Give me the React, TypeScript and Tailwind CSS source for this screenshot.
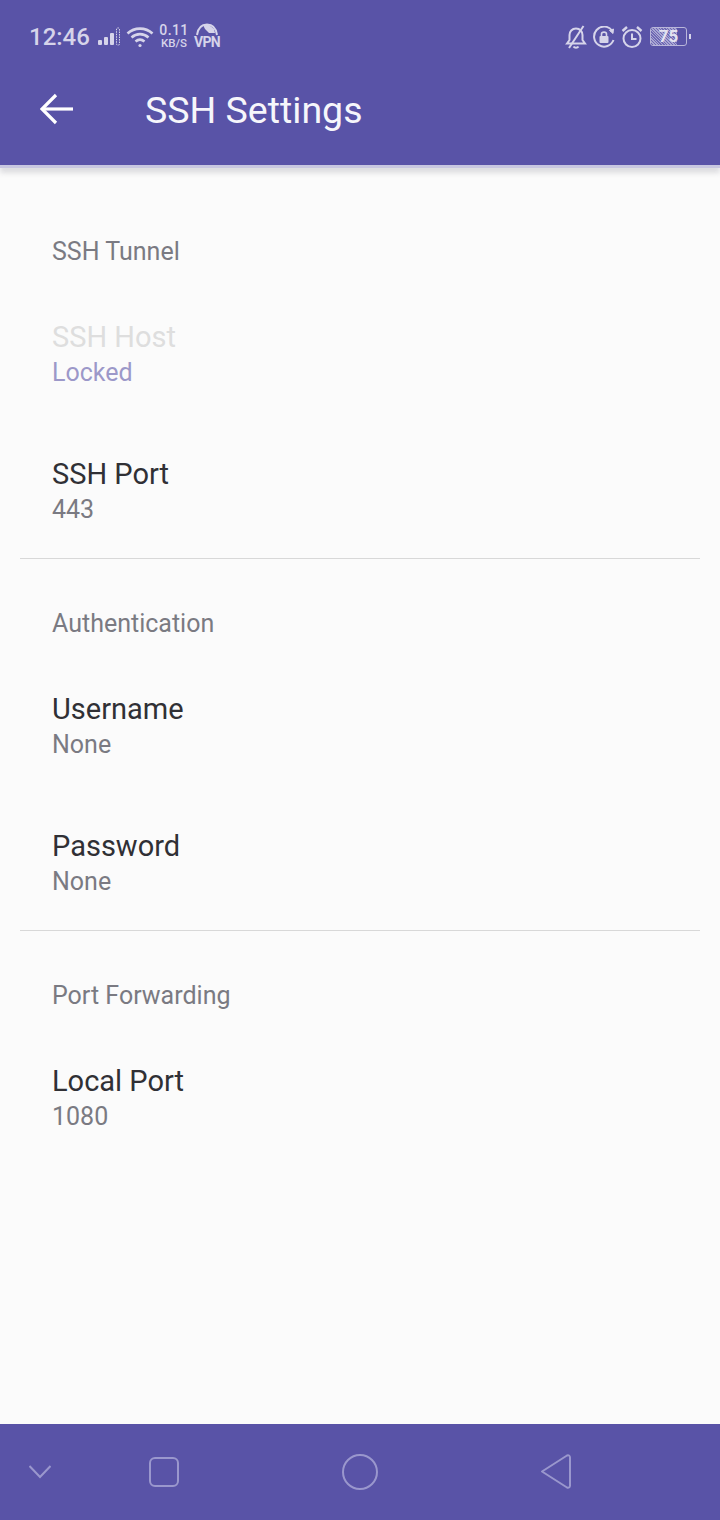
import React from "react";

const F = "font-['Roboto',sans-serif]";

function Row({ title, sub, titleCls = "text-[#303035]", subCls = "text-[#7a7a82]" }: { title: string; sub: string; titleCls?: string; subCls?: string }) {
  return (
    <div className="h-[137px] flex flex-col justify-center pl-[52px]">
      <div className={`text-[29px] leading-[36px] ${titleCls}`}>{title}</div>
      <div className={`text-[25px] leading-[36px] ${subCls}`}>{sub}</div>
    </div>
  );
}

function Category({ children, cls }: { children: string; cls: string }) {
  return <div className={`pl-[52px] text-[25px] leading-[36px] text-[#7a7a82] pb-[16px] ${cls}`}>{children}</div>;
}

const Ink = "#d6d4ea";

function StatusBar() {
  return (
    <div className="h-[55px] flex items-center pl-[29px] pr-[29px] pt-[18px]" style={{ color: Ink }}>
      <span className="text-[24px] leading-none font-medium w-[61px]">12:46</span>
      <svg width="24" height="20" viewBox="0 0 24 20" className="ml-[8px]">
        <rect x="0" y="13" width="4" height="5" rx="1" fill={Ink} />
        <rect x="6" y="10" width="4" height="8" rx="1" fill={Ink} />
        <rect x="12" y="6" width="4" height="12" rx="1" fill={Ink} />
        <rect x="18.5" y="1" width="3" height="17" rx="1" fill="none" stroke={Ink} strokeWidth="1" strokeDasharray="1.5 1" />
      </svg>
      <svg width="28" height="22" viewBox="0 0 28 22" className="ml-[4px]" fill="none" stroke={Ink} strokeWidth="2.6">
        <path d="M1.5 7.5 C8.5 1 19.5 1 26.5 7.5" />
        <path d="M5.5 11.5 C10.5 7 17.5 7 22.5 11.5" />
        <path d="M9.5 15.5 C12.5 13 15.5 13 18.5 15.5" />
        <circle cx="14" cy="19.5" r="1.6" fill={Ink} stroke="none" />
      </svg>
      <div className="ml-[5px] w-[30px] flex flex-col items-center font-medium leading-[13px]">
        <span className="text-[14px] tracking-[0.4px]">0.11</span>
        <span className="text-[11.5px]">KB/S</span>
      </div>
      <div className="ml-[5px] w-[26px] flex flex-col items-center -mt-[3px]">
        <svg width="24" height="13" viewBox="0 0 24 13" fill="none">
          <path d="M2 12 C3 5 7 1.5 12 1.5 C17 1.5 21 5 22 12" stroke={Ink} strokeWidth="2" />
          <path d="M8 2 L13 1 L19 6 L20 10 L14 10 L10 6 Z" fill={Ink} />
        </svg>
        <span className="text-[14px] leading-[12px] font-bold tracking-[-0.6px]">VPN</span>
      </div>
      <div className="ml-auto flex items-center">
        <svg width="22" height="24" viewBox="0 0 22 24" fill="none" stroke={Ink} strokeWidth="2" className="-ml-[1px]">
          <path d="M2 18.5 L4.5 15 V10 C4.5 6.5 7 3.5 11 3.5 C15 3.5 17.5 6.5 17.5 10 V15 L20 18.5 Z" />
          <path d="M8.5 21.5 C9.5 23 12.5 23 13.5 21.5" />
          <path d="M18.5 1 L4 23" />
        </svg>
        <svg width="22" height="22" viewBox="0 0 22 22" fill="none" stroke={Ink} strokeWidth="2" className="ml-[6px]">
          <path d="M19 4.5 A10 10 0 1 0 20.5 14" />
          <path d="M16.5 4.5 L20 7.5 L20.5 3 Z" fill={Ink} strokeWidth="1" />
          <rect x="6.5" y="10" width="9" height="7" rx="1" fill={Ink} stroke="none" />
          <path d="M8.5 10 V8 C8.5 5.5 13.5 5.5 13.5 8 V10" strokeWidth="1.6" />
        </svg>
        <svg width="22" height="24" viewBox="0 0 22 24" fill="none" stroke={Ink} strokeWidth="2" className="ml-[6px]">
          <circle cx="11" cy="13.5" r="8.5" />
          <path d="M11 8.5 V14 H15.5" />
          <path d="M1.5 6 L6 2 M20.5 6 L16 2" strokeWidth="2.4" />
        </svg>
        <div className="ml-[7px] w-[37px] h-[19px] rounded-[3px] border border-[#b9b6da] flex items-center overflow-hidden relative">
          <div className="h-full w-[74%] bg-[repeating-linear-gradient(45deg,#a8a5d2_0px,#a8a5d2_1px,#6f69b4_1px,#6f69b4_2px)]" />
          <span className="absolute inset-0 flex items-center justify-center text-[17px] leading-none font-bold text-[#e4e3f1]">75</span>
        </div>
        <div className="ml-[2px] w-[2px] h-[5px] bg-[#d6d4ea]" />
      </div>
    </div>
  );
}

function NavBar() {
  const c = "#9a97cd";
  return (
    <div className="mt-auto h-[96px] bg-[#5953a7] flex items-center pl-[29px] shrink-0">
      <svg width="22" height="14" viewBox="0 0 22 14" fill="none" stroke={c} strokeWidth="2">
        <path d="M0.5 1 L11 12 L21.5 1" />
      </svg>
      <svg width="30" height="30" viewBox="0 0 30 30" fill="none" stroke={c} strokeWidth="2" className="ml-[98px]">
        <rect x="1" y="1" width="28" height="28" rx="5" />
      </svg>
      <svg width="36" height="36" viewBox="0 0 36 36" fill="none" stroke={c} strokeWidth="2" className="ml-[163px]">
        <circle cx="18" cy="18" r="17" />
      </svg>
      <svg width="30" height="36" viewBox="0 0 30 36" fill="none" stroke={c} strokeWidth="2" strokeLinejoin="round" className="ml-[163px]">
        <path d="M1 17.5 L26 1.5 C27.5 0.8 29 1.5 29 3.5 V31.5 C29 33.5 27.5 34.2 26 33.5 Z" />
      </svg>
    </div>
  );
}

export default function App() {
  return (
    <div className={`w-[720px] h-[1520px] bg-[#fbfbfb] flex flex-col overflow-hidden ${F}`}>
      <header className="h-[165px] shrink-0 bg-[#5953a7] shadow-[0_3px_0_#c8c7e0,0_8px_5px_rgba(120,120,130,0.22)] relative">
        <StatusBar />
        <div className="h-[110px] flex items-center pl-[40px]">
          <svg width="34" height="34" viewBox="0 0 34 34" fill="none" stroke="#ffffff" strokeWidth="3.2">
            <path d="M33 16 H3" />
            <path d="M16 2 L2 16 L16 30" />
          </svg>
          <span className="ml-[71px] mt-[2px] text-[37.5px] leading-none text-[#f6f6fb]">SSH Settings</span>
        </div>
      </header>
      <main>
        <Category cls="pt-[69px]">SSH Tunnel</Category>
        <Row title="SSH Host" sub="Locked" titleCls="text-[#dedede]" subCls="text-[#9c98c9]" />
        <Row title="SSH Port" sub="443" />
        <div className="mx-[20px] -mt-[2px] mb-[1px] h-[1px] bg-[#d8d8d8]" />
        <Category cls="pt-[46px]">Authentication</Category>
        <Row title="Username" sub="None" />
        <Row title="Password" sub="None" />
        <div className="mx-[20px] -mt-[2px] mb-[1px] h-[1px] bg-[#d8d8d8]" />
        <Category cls="pt-[46px]">Port Forwarding</Category>
        <Row title="Local Port" sub="1080" />
      </main>
      <NavBar />
    </div>
  );
}
